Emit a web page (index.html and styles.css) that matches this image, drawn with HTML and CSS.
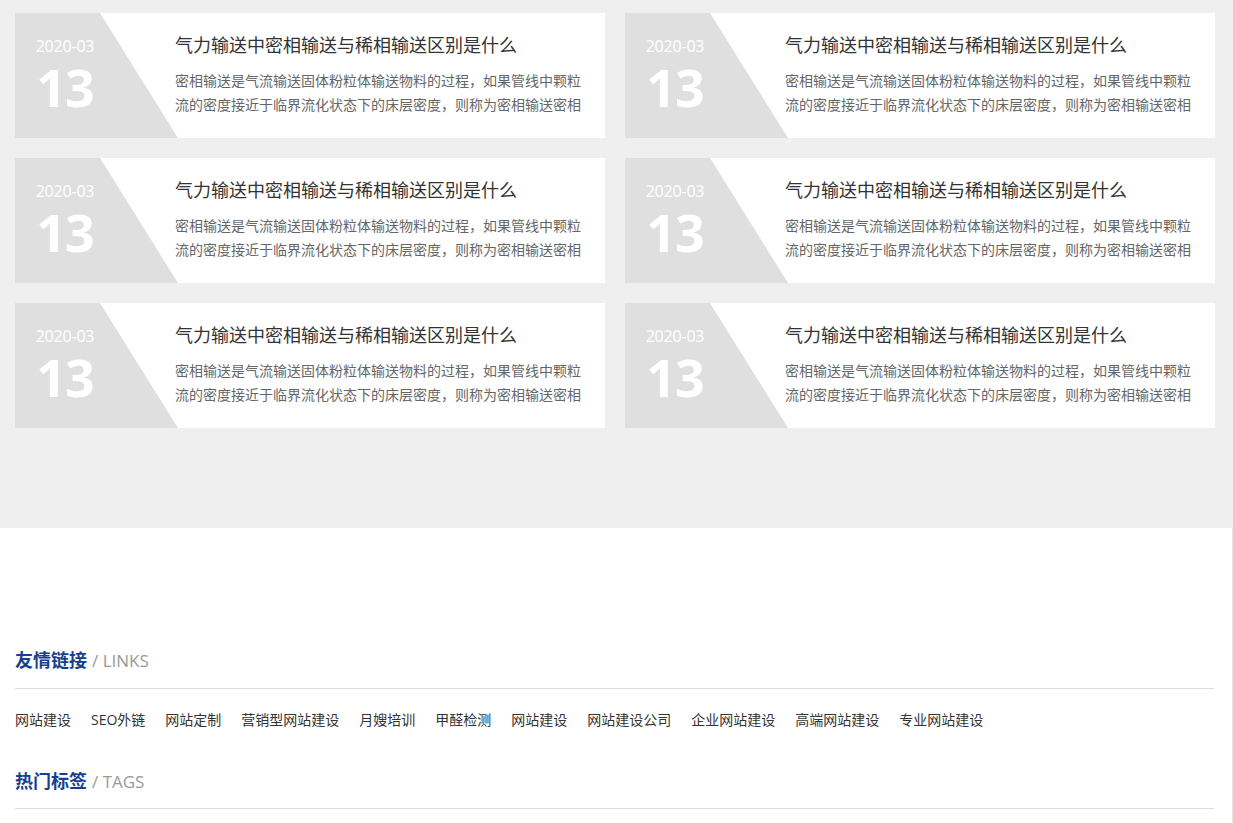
FILE: index.html
```html
<!DOCTYPE html>
<html lang="zh-CN">
<head>
<meta charset="utf-8">
<title>新闻</title>
<link rel="stylesheet" href="styles.css">
</head>
<body>
<section class="news">
  <div class="news-grid">
    <a class="card" href="#">
      <div class="date"><span class="ym">2020-03</span><span class="day">13</span></div>
      <div class="info">
        <h3 class="title">气力输送中密相输送与稀相输送区别是什么</h3>
        <p class="desc">密相输送是气流输送固体粉粒体输送物料的过程，如果管线中颗粒流的密度接近于临界流化状态下的床层密度，则称为密相输送密相</p>
      </div>
    </a>
    <a class="card" href="#">
      <div class="date"><span class="ym">2020-03</span><span class="day">13</span></div>
      <div class="info">
        <h3 class="title">气力输送中密相输送与稀相输送区别是什么</h3>
        <p class="desc">密相输送是气流输送固体粉粒体输送物料的过程，如果管线中颗粒流的密度接近于临界流化状态下的床层密度，则称为密相输送密相</p>
      </div>
    </a>
    <a class="card" href="#">
      <div class="date"><span class="ym">2020-03</span><span class="day">13</span></div>
      <div class="info">
        <h3 class="title">气力输送中密相输送与稀相输送区别是什么</h3>
        <p class="desc">密相输送是气流输送固体粉粒体输送物料的过程，如果管线中颗粒流的密度接近于临界流化状态下的床层密度，则称为密相输送密相</p>
      </div>
    </a>
    <a class="card" href="#">
      <div class="date"><span class="ym">2020-03</span><span class="day">13</span></div>
      <div class="info">
        <h3 class="title">气力输送中密相输送与稀相输送区别是什么</h3>
        <p class="desc">密相输送是气流输送固体粉粒体输送物料的过程，如果管线中颗粒流的密度接近于临界流化状态下的床层密度，则称为密相输送密相</p>
      </div>
    </a>
    <a class="card" href="#">
      <div class="date"><span class="ym">2020-03</span><span class="day">13</span></div>
      <div class="info">
        <h3 class="title">气力输送中密相输送与稀相输送区别是什么</h3>
        <p class="desc">密相输送是气流输送固体粉粒体输送物料的过程，如果管线中颗粒流的密度接近于临界流化状态下的床层密度，则称为密相输送密相</p>
      </div>
    </a>
    <a class="card" href="#">
      <div class="date"><span class="ym">2020-03</span><span class="day">13</span></div>
      <div class="info">
        <h3 class="title">气力输送中密相输送与稀相输送区别是什么</h3>
        <p class="desc">密相输送是气流输送固体粉粒体输送物料的过程，如果管线中颗粒流的密度接近于临界流化状态下的床层密度，则称为密相输送密相</p>
      </div>
    </a>
  </div>
</section>
<section class="links-area">
  <div class="sec-head"><span class="cn">友情链接</span><span class="en">/ LINKS</span></div>
  <ul class="link-list">
    <li><a href="#">网站建设</a></li>
    <li><a href="#">SEO外链</a></li>
    <li><a href="#">网站定制</a></li>
    <li><a href="#">营销型网站建设</a></li>
    <li><a href="#">月嫂培训</a></li>
    <li><a href="#">甲醛检测</a></li>
    <li><a href="#">网站建设</a></li>
    <li><a href="#">网站建设公司</a></li>
    <li><a href="#">企业网站建设</a></li>
    <li><a href="#">高端网站建设</a></li>
    <li><a href="#">专业网站建设</a></li>
  </ul>
  <div class="sec-head tags"><span class="cn">热门标签</span><span class="en">/ TAGS</span></div>
</section>
</body>
</html>
```

FILE: styles.css
```css
* { box-sizing: border-box; }
html, body { margin: 0; padding: 0; }
body {
  font-family: "Open Sans", "Noto Sans CJK SC", sans-serif;
  background: #fff;
  color: #333;
  height: 823px;
  overflow: hidden;
}
a { text-decoration: none; color: inherit; }

.news {
  background: #efefef;
  padding: 13px 18px 100px 15px;
}
.news-grid {
  display: grid;
  grid-template-columns: 590px 590px;
  column-gap: 20px;
  row-gap: 20px;
}
.card {
  display: flex;
  height: 125px;
  background: #fff;
}
.date {
  flex: 0 0 163px;
  margin-right: -3px;
  background: #dfdfdf;
  clip-path: polygon(0 0, 85px 0, 100% 100%, 0 100%);
  display: flex;
  flex-direction: column;
  padding: 22px 0 0 20px;
  color: #fff;
}
.ym {
  font-size: 16px;
  line-height: 22px;
  width: 60px;
  text-align: center;
  letter-spacing: -0.2px;
}
.day {
  font-size: 52px;
  font-weight: 700;
  line-height: 52px;
  margin-top: 4px;
  width: 60px;
  text-align: center;
  letter-spacing: -1px;
}
.info {
  flex: 1;
  padding: 20px 20px 0 0;
  min-width: 0;
}
.title {
  margin: 0;
  font-size: 18px;
  font-weight: 400;
  line-height: 25px;
  color: #333;
  white-space: nowrap;
}
.desc {
  margin: 11px 0 0;
  font-size: 14px;
  line-height: 24px;
  height: 48px;
  overflow: hidden;
  color: #666;
  width: 410px;
}

.links-area {
  padding: 117px 18px 0 15px;
  border-right: 1px solid #e6e6e6;
  height: 295px;
}
.sec-head {
  border-bottom: 1px solid #ddd;
  padding-bottom: 12px;
  line-height: 30px;
  display: flex;
  align-items: baseline;
}
.sec-head .cn {
  font-size: 18px;
  font-weight: 700;
  color: #163f8f;
}
.sec-head .en {
  font-size: 17px;
  color: #999;
  margin-left: 5px;
}
.link-list {
  list-style: none;
  margin: 21px 0 0;
  padding: 0;
  display: flex;
  flex-wrap: wrap;
  column-gap: 20px;
  font-size: 14px;
  line-height: 20px;
  color: #333;
}
.sec-head.tags {
  margin-top: 36px;
  padding-bottom: 11px;
}
```
